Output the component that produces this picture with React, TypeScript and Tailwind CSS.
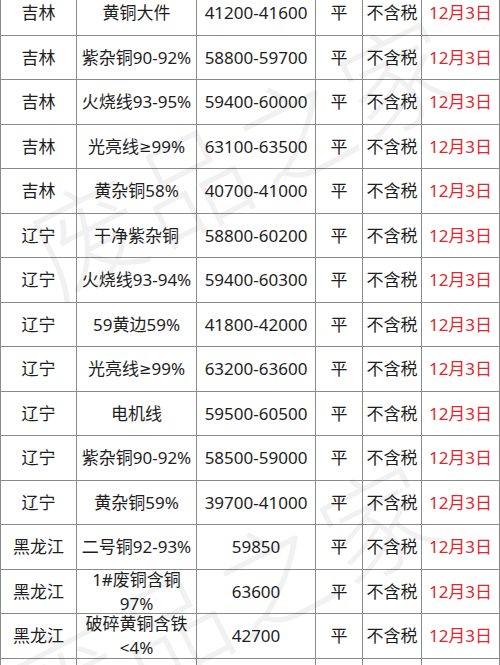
import React from "react";

type Row = { p: string; n: React.ReactNode; price: string };

const rows: Row[] = [
  { p: "吉林", n: "黄铜大件", price: "41200-41600" },
  { p: "吉林", n: "紫杂铜90-92%", price: "58800-59700" },
  { p: "吉林", n: "火烧线93-95%", price: "59400-60000" },
  { p: "吉林", n: <>光亮线<span style={{ fontFamily: '"DejaVu Sans", sans-serif', fontSize: "15px" }}>≥</span>99%</>, price: "63100-63500" },
  { p: "吉林", n: "黄杂铜58%", price: "40700-41000" },
  { p: "辽宁", n: "干净紫杂铜", price: "58800-60200" },
  { p: "辽宁", n: "火烧线93-94%", price: "59400-60300" },
  { p: "辽宁", n: "59黄边59%", price: "41800-42000" },
  { p: "辽宁", n: <>光亮线<span style={{ fontFamily: '"DejaVu Sans", sans-serif', fontSize: "15px" }}>≥</span>99%</>, price: "63200-63600" },
  { p: "辽宁", n: "电机线", price: "59500-60500" },
  { p: "辽宁", n: "紫杂铜90-92%", price: "58500-59000" },
  { p: "辽宁", n: "黄杂铜59%", price: "39700-41000" },
  { p: "黑龙江", n: "二号铜92-93%", price: "59850" },
  {
    p: "黑龙江",
    n: (
      <>
        1#废铜含铜
        <br />
        97%
      </>
    ),
    price: "63600",
  },
  {
    p: "黑龙江",
    n: (
      <>
        破碎黄铜含铁
        <br />
        &lt;4%
      </>
    ),
    price: "42700",
  },
  { p: "", n: "", price: "" },
];

const cell = "bg-white flex items-center justify-center text-center";

export default function App() {
  return (
    <div
      className="relative w-[500px] h-[665px] overflow-hidden bg-white text-[#1e1e1e]"
      style={{ fontFamily: '"Noto Sans", "Noto Sans CJK SC", sans-serif' }}
    >
      <div className="mt-[-10px] grid grid-cols-[75px_119px_118px_46px_58px_77px] gap-px bg-[#8a8a8a] p-px text-[17px] leading-[24px]">
        {rows.map((r, i) => {
          const h = i % 2 === 0 ? "h-[44px]" : "h-[43px]";
          return (
            <React.Fragment key={i}>
              <div className={`${cell} ${h}`}>{r.p}</div>
              <div className={`${cell} ${h} px-[2px]`}>{r.n}</div>
              <div className={`${cell} ${h}`}>{r.price}</div>
              <div className={`${cell} ${h}`}>{r.price ? "平" : ""}</div>
              <div className={`${cell} ${h}`}>{r.price ? "不含税" : ""}</div>
              <div className={`${cell} ${h} text-[#e3262d]`}>{r.price ? "12月3日" : ""}</div>
            </React.Fragment>
          );
        })}
      </div>

      <div className="pointer-events-none absolute inset-0">
        <div
          className="absolute left-[10px] top-[95px] whitespace-nowrap text-[112px] leading-none tracking-[4px] text-black opacity-[0.05] rotate-[-27deg]"
          style={{ fontFamily: '"Noto Sans CJK SC", sans-serif', fontWeight: 300 }}
        >
          废品之家
        </div>
        <div
          className="absolute left-[-10px] top-[540px] whitespace-nowrap text-[112px] leading-none tracking-[4px] text-black opacity-[0.05] rotate-[-27deg]"
          style={{ fontFamily: '"Noto Sans CJK SC", sans-serif', fontWeight: 300 }}
        >
          废品之家
        </div>
      </div>
    </div>
  );
}
